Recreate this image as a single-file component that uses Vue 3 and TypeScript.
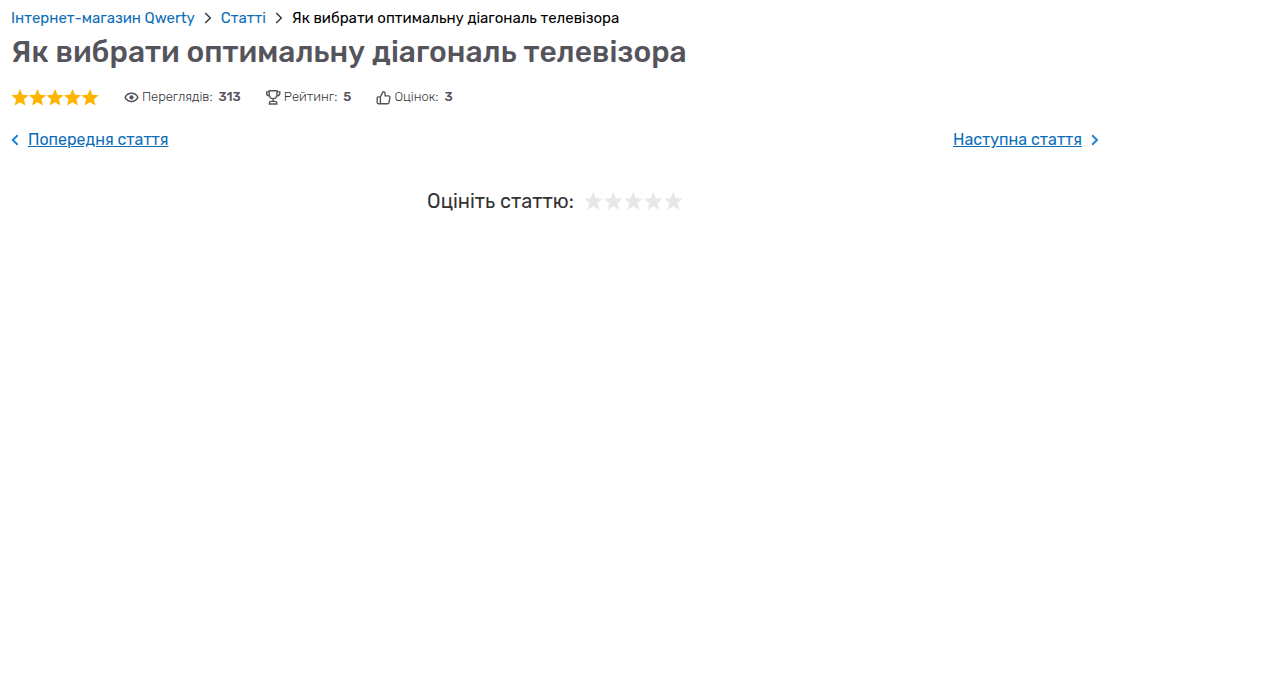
<script setup lang="ts">
import { ref } from 'vue'

const title = 'Як вибрати оптимальну діагональ телевізора'
const stars = [1, 2, 3, 4, 5]
const vote = ref<number | null>(null)
</script>

<template>
  <main class="page">
    <nav class="breadcrumbs" aria-label="Навігація">
      <a href="#">Інтернет-магазин Qwerty</a>
      <svg class="crumb-arrow" viewBox="0 0 8 12" aria-hidden="true"><path d="M1.2 1 6.3 6l-5.1 5" /></svg>
      <a href="#">Статті</a>
      <svg class="crumb-arrow" viewBox="0 0 8 12" aria-hidden="true"><path d="M1.2 1 6.3 6l-5.1 5" /></svg>
      <span>{{ title }}</span>
    </nav>

    <h1>{{ title }}</h1>

    <div class="meta">
      <div class="score" role="img" aria-label="5 з 5">
        <svg viewBox="0 0 88 18" aria-hidden="true">
          <path
            v-for="n in stars"
            :key="n"
            :transform="`translate(${(n - 1) * 17.5} .5)`"
            d="M9 .5 11.4 6.3 17.6 6.8 12.9 10.8 14.4 17 9 13.7 3.6 17 5.1 10.8.4 6.8 6.6 6.3Z"
          />
        </svg>
      </div>
      <div class="stat">
        <svg viewBox="0 0 15 15" aria-hidden="true">
          <path d="M1.1 7.4C2.5 4.5 4.7 3.3 7.5 3.3s5 1.2 6.4 4.1c-1.4 2.9-3.6 4.1-6.4 4.1S2.5 10.3 1.1 7.4Z" />
          <circle class="pupil" cx="7.5" cy="7.4" r="2.1" />
        </svg>
        <span>Переглядів:</span><b>313</b>
      </div>
      <div class="stat">
        <svg viewBox="0 0 15 15" aria-hidden="true">
          <path d="M3.2.7h7.8v3.6c0 2.6-1.6 4.3-3.9 4.3S3.2 6.9 3.2 4.3ZM3.2 1.9H.6v1.3c0 1.6 1.1 2.8 3.1 2.9M11 1.9h2.8v1.3c0 1.6-1.1 2.8-3.3 2.9M7.1 8.6v2.8M3.4 14v-.9c0-1.1.7-1.7 1.7-1.7h4c1 0 1.7.6 1.7 1.7v.9Z" />
        </svg>
        <span>Рейтинг:</span><b>5</b>
      </div>
      <div class="stat">
        <svg viewBox="0 0 15 15" aria-hidden="true">
          <path d="M4.4 6.9H2.2c-.7 0-1 .4-1 1v4.7c0 .7.4 1.1 1 1.1h2.2ZM4.4 6.9 7 1.6c1.3 0 2.1.8 2.1 2v2.3h3.3c1.1 0 1.7.7 1.5 1.7l-.8 4.7c-.2.9-.7 1.4-1.6 1.4H4.4" />
        </svg>
        <span>Оцінок:</span><b>3</b>
      </div>
    </div>

    <nav class="siblings" aria-label="Інші статті">
      <a href="#">
        <svg viewBox="0 0 8 12" aria-hidden="true"><path d="M6.6 1.2 1.8 6l4.8 4.8" /></svg>
        <span>Попередня стаття</span>
      </a>
      <a href="#">
        <span>Наступна стаття</span>
        <svg viewBox="0 0 8 12" aria-hidden="true"><path d="M1.2 1.2 6 6l-4.8 4.8" /></svg>
      </a>
    </nav>

    <form class="rate">
      <span id="rate-label">Оцініть статтю:</span>
      <div class="rate-stars" role="radiogroup" aria-labelledby="rate-label">
        <input
          v-for="n in stars"
          :key="n"
          v-model="vote"
          type="radio"
          name="vote"
          :value="n"
          :aria-label="`Оцінка ${n}`"
          :class="{ active: vote !== null && n <= vote }"
        />
      </div>
    </form>
  </main>
</template>

<style>
body {
  background: #fff;
}
</style>

<style scoped>
.page {
  box-sizing: border-box;
  max-width: 1110px;
  padding: 8px 11px;
  font-family: Rubik, Roboto, 'Liberation Sans', sans-serif;
  color: #55545c;
}

a {
  color: #0b6db7;
}

svg {
  flex: none;
  fill: none;
  stroke: currentColor;
  stroke-width: 1.4;
}

.breadcrumbs {
  display: flex;
  align-items: center;
  font-size: 15px;
  line-height: 20px;
  color: #000;
}

.breadcrumbs a {
  text-decoration: none;
}

.crumb-arrow {
  width: 8px;
  height: 12px;
  margin: 0 9px;
  color: #30343f;
}

h1 {
  margin: 4px 0 0;
  font-size: 30px;
  line-height: 40px;
  font-weight: 500;
}

.meta {
  display: flex;
  align-items: center;
  margin-top: 15px;
  font-size: 13px;
  line-height: 20px;
}

.score,
.rate-stars {
  display: flex;
}

.score svg {
  width: 88px;
  height: 18px;
  fill: #ffb400;
  stroke: none;
}

.stat {
  display: flex;
  align-items: center;
  margin-left: 25px;
}

.stat span {
  font-weight: 300;
  color: #34333c;
}

.stat svg {
  width: 15px;
  height: 15px;
  margin-right: 3px;
}

.stat .pupil {
  fill: currentColor;
  stroke: none;
}

.stat b {
  margin-left: 6px;
  font-weight: 500;
}

.siblings {
  display: flex;
  justify-content: space-between;
  margin-top: 23px;
  font-size: 16px;
  line-height: 20px;
}

.siblings a {
  display: flex;
  align-items: center;
  gap: 9px;
  text-decoration: none;
}

.siblings span {
  text-decoration: underline;
}

.siblings svg {
  width: 8px;
  height: 12px;
  stroke-width: 2;
  color: #2384d2;
}

.rate {
  display: flex;
  justify-content: center;
  align-items: center;
  gap: 10px;
  margin-top: 39px;
  font-size: 20px;
  line-height: 24px;
  color: #333;
}

.rate-stars {
  gap: 1px;
}

.rate-stars input {
  appearance: none;
  width: 19px;
  height: 19px;
  margin: 0;
  background: #e7e7e7;
  clip-path: polygon(50% 3%, 64% 35%, 98% 38%, 72% 60%, 80% 96%, 50% 77%, 20% 96%, 28% 60%, 2% 38%, 36% 35%);
  cursor: pointer;
}

.rate-stars input.active {
  background: #ffb400;
}
</style>
